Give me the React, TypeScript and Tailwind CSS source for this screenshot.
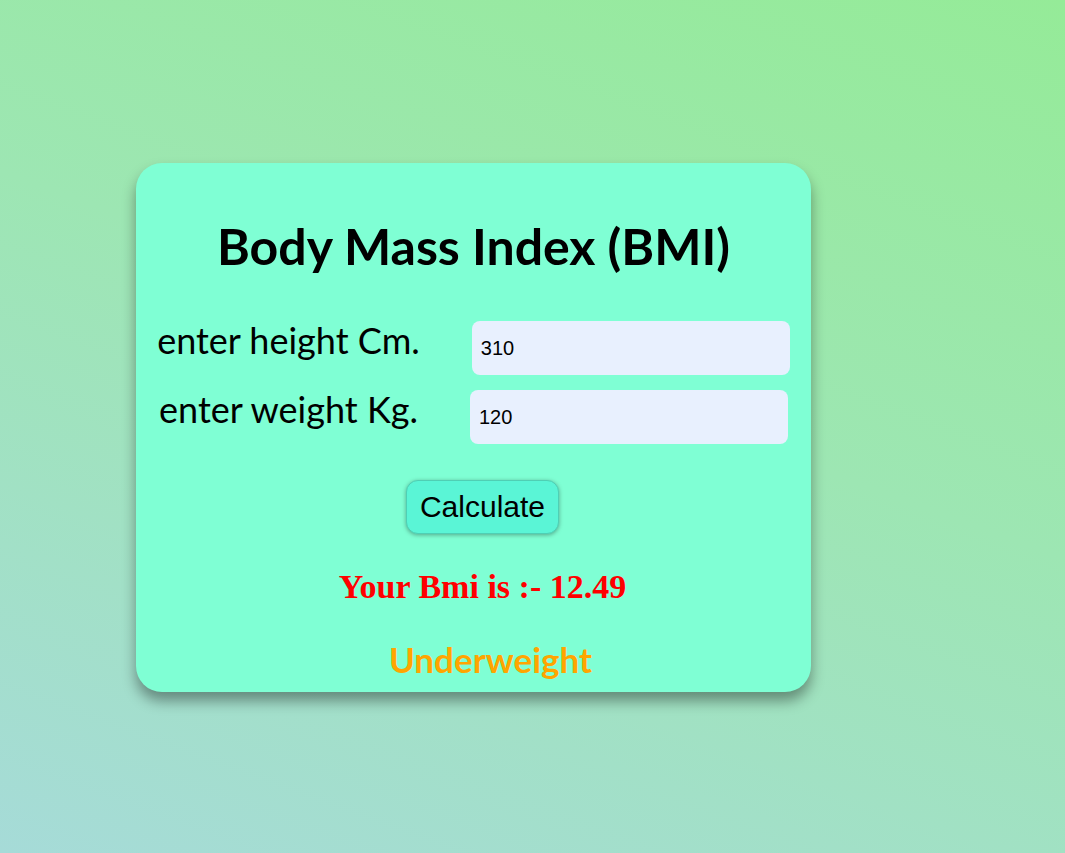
import { useState } from 'react';

function bmiLabel(bmi: number) {
  if (bmi < 18.5) return 'Underweight';
  if (bmi < 25) return 'Normal';
  if (bmi < 30) return 'Overweight';
  return 'Obese';
}

export default function App() {
  const [height, setHeight] = useState('310');
  const [weight, setWeight] = useState('120');
  const [bmi, setBmi] = useState(12.49);

  function calculate() {
    const h = parseFloat(height) / 100;
    const w = parseFloat(weight);
    if (!h || !w) return;
    setBmi(Math.round((w / (h * h)) * 100) / 100);
  }

  return (
    <div className="min-h-[853px] w-full bg-[linear-gradient(200deg,#95eb98_0%,#9de6b3_45%,#a6dbd8_100%)] pl-[136px] pt-[163px]">
      <div className="w-[675px] h-[529px] rounded-[26px] bg-[#7fffd4] shadow-[0_9px_14px_rgba(0,0,0,0.38)] flex flex-col items-center font-['Lato',sans-serif]">
        {/* Title */}
        <h1 className="mt-[58px] text-[50px] leading-none font-bold text-black">Body Mass Index (BMI)</h1>

        {/* Inputs */}
        <div className="mt-[50px] flex items-center gap-[52px]">
          <label className="mb-[16px] text-[36px] leading-none text-black">enter height Cm.</label>
          <input
            value={height}
            onChange={(e) => setHeight(e.target.value)}
            className="w-[318px] h-[54px] rounded-[8px] bg-[#e8f0fe] px-[9px] text-[20px] font-['Liberation_Sans',sans-serif] text-black outline-none"
          />
        </div>
        <div className="mt-[15px] flex items-center gap-[52px]">
          <label className="mb-[16px] text-[36px] leading-none text-black">enter weight Kg.</label>
          <input
            value={weight}
            onChange={(e) => setWeight(e.target.value)}
            className="w-[318px] h-[54px] rounded-[8px] bg-[#e8f0fe] px-[9px] text-[20px] font-['Liberation_Sans',sans-serif] text-black outline-none"
          />
        </div>

        {/* Button */}
        <button
          onClick={calculate}
          className="mt-[36px] ml-[18px] h-[54px] px-[13px] rounded-[12px] bg-[#5af5d6] border border-[#4fcfb4] shadow-[0_1px_4px_rgba(0,0,0,0.35)] text-[30px] leading-none font-['Liberation_Sans',sans-serif] text-black"
        >
          Calculate
        </button>

        {/* Result */}
        <p className="mt-[36px] ml-[18px] text-[34px] leading-none font-bold text-[#ff0000] font-['Liberation_Serif',serif]">
          Your Bmi is :- {bmi}
        </p>
        <p className="mt-[38px] ml-[34px] text-[35px] leading-none font-bold text-[#ffa500]">{bmiLabel(bmi)}</p>
      </div>
    </div>
  );
}
